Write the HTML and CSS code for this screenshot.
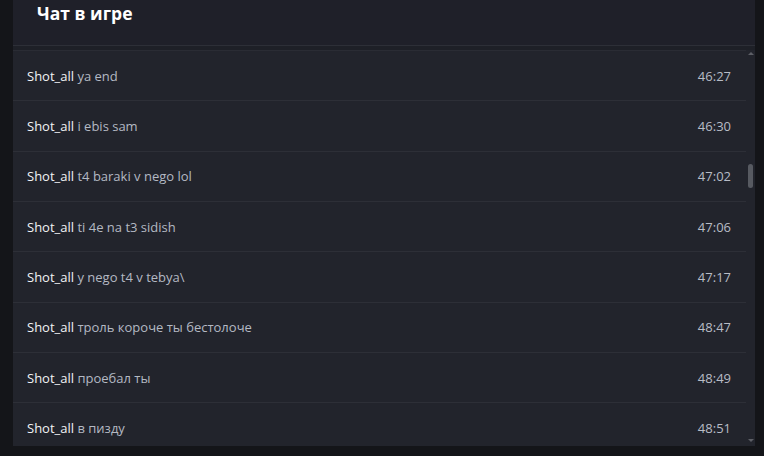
FILE: index.html
```html
<!DOCTYPE html>
<html lang="ru">
<head>
<meta charset="utf-8">
<title>Чат в игре</title>
<link rel="stylesheet" href="styles.css">
</head>
<body>
<div class="panel">
  <div class="header"><h2 class="title">Чат в игре</h2></div>
  <div class="divider"></div>
  <div class="body">
    <div class="list">
      <div class="row"><div class="msg"><span class="name">Shot_all</span> <span class="text">ya end</span></div><span class="time">46:27</span></div>
      <div class="row"><div class="msg"><span class="name">Shot_all</span> <span class="text">i ebis sam</span></div><span class="time">46:30</span></div>
      <div class="row"><div class="msg"><span class="name">Shot_all</span> <span class="text">t4 baraki v nego lol</span></div><span class="time">47:02</span></div>
      <div class="row"><div class="msg"><span class="name">Shot_all</span> <span class="text">ti 4e na t3 sidish</span></div><span class="time">47:06</span></div>
      <div class="row"><div class="msg"><span class="name">Shot_all</span> <span class="text">y nego t4 v tebya\</span></div><span class="time">47:17</span></div>
      <div class="row"><div class="msg"><span class="name">Shot_all</span> <span class="text">троль короче ты бестолоче</span></div><span class="time">48:47</span></div>
      <div class="row"><div class="msg"><span class="name">Shot_all</span> <span class="text">проебал ты</span></div><span class="time">48:49</span></div>
      <div class="row"><div class="msg"><span class="name">Shot_all</span> <span class="text">в пизду</span></div><span class="time">48:51</span></div>
    </div>
    <div class="scrollbar">
      <div class="arrow up"></div>
      <div class="thumb"></div>
      <div class="spacer"></div>
      <div class="arrow down"></div>
    </div>
  </div>
</div>
</body>
</html>
```
FILE: styles.css
```css
html, body {
  margin: 0;
  padding: 0;
  background: #141519;
  font-family: "Open Sans", "Noto Sans", sans-serif;
}
.panel {
  width: 742px;
  height: 446px;
  margin-left: 13px;
  background: #1f2029;
  display: flex;
  flex-direction: column;
  overflow: hidden;
}
.header {
  height: 45px;
  padding-left: 24px;
  box-sizing: border-box;
  flex: none;
}
.title {
  margin: 0;
  font-size: 17.5px;
  font-weight: 700;
  line-height: 26px;
  color: #ffffff;
}
.divider {
  height: 5px;
  flex: none;
  border-top: 1px solid #2d2f37;
  box-sizing: border-box;
  background: #1e2027;
}
.body {
  flex: 1;
  display: flex;
  min-height: 0;
}
.list {
  flex: 1;
  background: #22242c;
  border-top: 1px solid #2a2c34;
  overflow: hidden;
}
.row {
  height: 50.33px;
  box-sizing: border-box;
  border-bottom: 1px solid #2d2f37;
  display: flex;
  align-items: center;
  justify-content: space-between;
  padding: 0 15px 0 14px;
  font-size: 13px;
}
.name { color: #f2f3f5; }
.text { color: #b4b9c3; }
.time { color: #b8bcc6; }
.scrollbar {
  width: 9px;
  flex: none;
  background: #22242c;
  display: flex;
  flex-direction: column;
  align-items: center;
}
.arrow {
  width: 0;
  height: 0;
  border-left: 3px solid transparent;
  border-right: 3px solid transparent;
}
.arrow.up {
  margin-top: 2px;
  border-bottom: 3px solid #5d5f66;
}
.arrow.down {
  margin-bottom: 4px;
  border-top: 3px solid #5d5f66;
}
.thumb {
  margin-top: 109px;
  width: 5px;
  height: 24px;
  border-radius: 3px;
  background: #575a61;
}
.spacer { flex: 1; }
```
